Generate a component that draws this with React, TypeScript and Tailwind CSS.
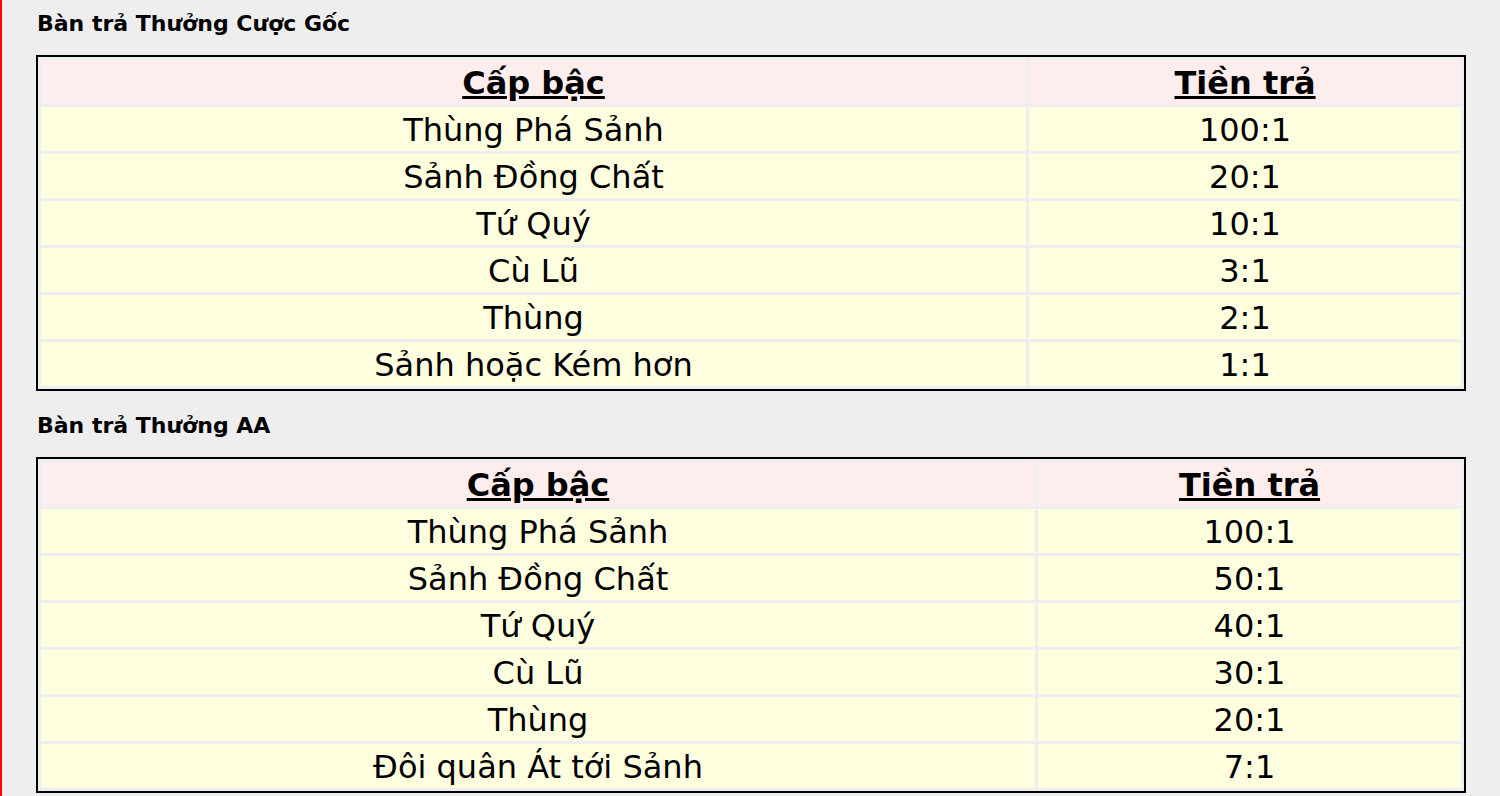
const baseRows = [
  ["Thùng Phá Sảnh", "100:1"],
  ["Sảnh Đồng Chất", "20:1"],
  ["Tứ Quý", "10:1"],
  ["Cù Lũ", "3:1"],
  ["Thùng", "2:1"],
  ["Sảnh hoặc Kém hơn", "1:1"],
];

const aaRows = [
  ["Thùng Phá Sảnh", "100:1"],
  ["Sảnh Đồng Chất", "50:1"],
  ["Tứ Quý", "40:1"],
  ["Cù Lũ", "30:1"],
  ["Thùng", "20:1"],
  ["Đôi quân Át tới Sảnh", "7:1"],
];

function PayTable({ title, rows, wide }: { title: string; rows: string[][]; wide: boolean }) {
  return (
    <section>
      <h3 className="h-[26px] pl-px text-[22px] font-bold leading-[26px] text-black">{title}</h3>
      <table className="mt-[18px] w-full border-separate border-spacing-[3px] border-2 border-black text-[32px] leading-[41px] text-black">
        <thead>
          <tr>
            <th className={`h-[44px] bg-[#fdeded] p-0 pt-[3px] text-center font-bold underline ${wide ? "w-[994px]" : "w-[985px]"}`}>
              Cấp bậc
            </th>
            <th className="h-[44px] bg-[#fdeded] p-0 pt-[3px] text-center font-bold underline">Tiền trả</th>
          </tr>
        </thead>
        <tbody>
          {rows.map(([rank, pay]) => (
            <tr key={rank}>
              <td className="h-[44px] bg-[#ffffe0] p-0 pt-[3px] text-center">{rank}</td>
              <td className="h-[44px] bg-[#ffffe0] p-0 pt-[3px] text-center">{pay}</td>
            </tr>
          ))}
        </tbody>
      </table>
    </section>
  );
}

export default function App() {
  return (
    <div
      className="min-h-[796px] border-l-2 border-[#ff0000] bg-[#eeeeee] px-[34px] pt-[11px]"
      style={{ fontFamily: '"DejaVu Sans", Verdana, sans-serif' }}
    >
      <div className="flex flex-col gap-[22px]">
        <PayTable title="Bàn trả Thưởng Cược Gốc" rows={baseRows} wide={false} />
        <PayTable title="Bàn trả Thưởng AA" rows={aaRows} wide={true} />
      </div>
    </div>
  );
}
